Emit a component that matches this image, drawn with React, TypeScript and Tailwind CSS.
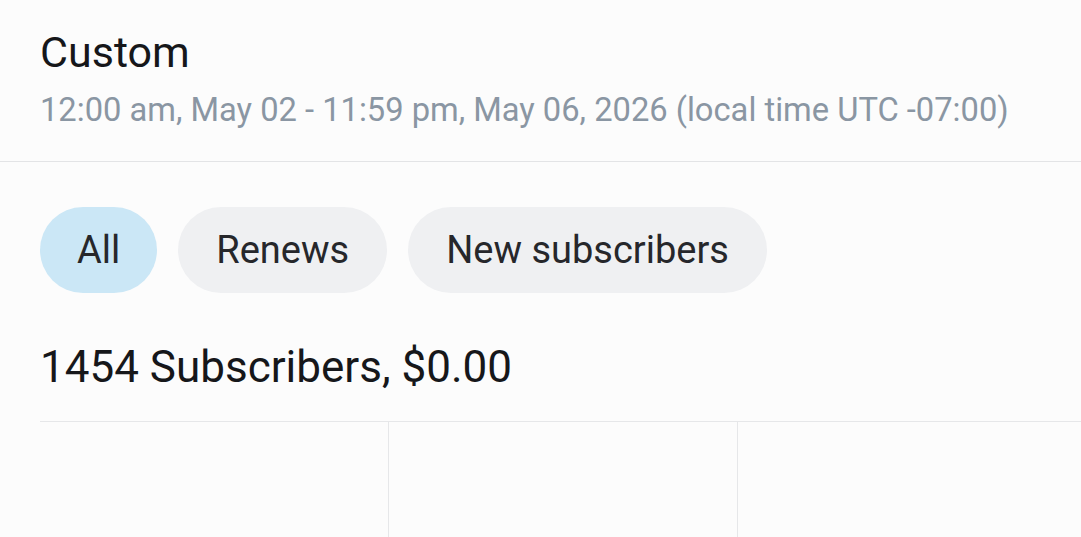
const chips = [
  { label: "All", active: true },
  { label: "Renews", active: false },
  { label: "New subscribers", active: false },
];

export default function App() {
  return (
    <div className="h-[537px] w-[1081px] overflow-hidden bg-[#fcfcfc] font-['Roboto',sans-serif]">
      {/* header with date range */}
      <div className="border-b border-[#e3e4e6] pl-10 pt-[28px] pb-[31px]">
        <div className="text-[43px] leading-[48px] text-[#16171a]">Custom</div>
        <div className="mt-[14px] text-[32.7px] leading-[40px] text-[#8a96a3]">
          12:00 am, May 02 - 11:59 pm, May 06, 2026 (local time UTC -07:00)
        </div>
      </div>

      <div className="pl-10">
        {/* filter chips */}
        <div className="mt-[45px] flex gap-[21px]">
          {chips.map((c) => (
            <button
              key={c.label}
              className={
                c.active
                  ? "flex h-[86px] items-center rounded-full bg-[#cbe7f6] px-[37px] text-[38px] text-[#26272b]"
                  : "flex h-[86px] items-center rounded-full bg-[#eff0f2] px-[38px] text-[38px] text-[#26272b]"
              }
            >
              {c.label}
            </button>
          ))}
        </div>

        <div className="mt-[49px] text-[44px] leading-[50px] text-[#16171a]">
          1454 Subscribers, $0.00
        </div>

        {/* table columns */}
        <div className="mt-[29px] grid h-[200px] w-[1400px] grid-cols-[349px_349px_349px_1fr] border-t border-[#e6e7e9]">
          <div className="border-r border-[#e6e7e9]" />
          <div className="border-r border-[#e6e7e9]" />
          <div className="border-r border-[#e6e7e9]" />
          <div />
        </div>
      </div>
    </div>
  );
}
